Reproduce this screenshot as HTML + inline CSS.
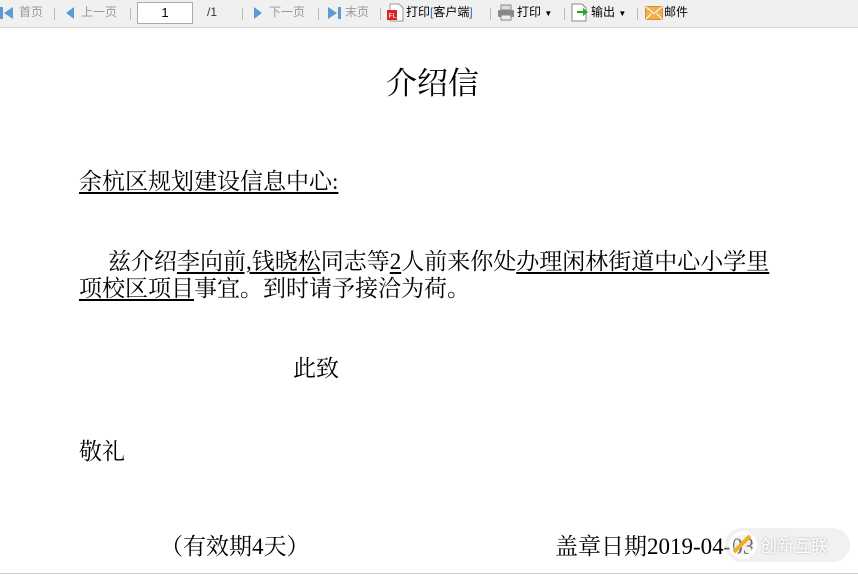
<!DOCTYPE html>
<html><head><meta charset="utf-8"><style>
body{margin:0;width:858px;height:577px;background:#fff;position:relative;overflow:hidden;font-family:"Liberation Serif","Noto Serif CJK SC",serif;color:#000}
.tb{position:absolute;left:0;top:0;width:858px;height:27px;background:#f0f0f0;border-bottom:1px solid #d8d8d8;font-family:"Liberation Sans","Noto Sans CJK SC",sans-serif;font-size:12px;color:#999}
.tb span{position:absolute;top:4px;white-space:nowrap;line-height:17px}
.sep{position:absolute;top:8px;width:1px;height:12px;background:#bbb}
.t{position:absolute;white-space:nowrap;font-size:23px;line-height:24px}
u{text-decoration:underline;text-underline-offset:3px}
</style></head><body>
<div class="tb">
<svg style="position:absolute;left:0;top:6px" width="14" height="14"><rect x="0" y="1" width="3" height="12" fill="#5b9bd5"/><polygon points="13,1 13,13 4,7" fill="#5b9bd5"/></svg>
<span style="left:19px">首页</span><div class="sep" style="left:54px"></div>
<svg style="position:absolute;left:65px;top:6px" width="10" height="14"><polygon points="9,1 9,13 1,7" fill="#5b9bd5"/></svg>
<span style="left:81px">上一页</span><div class="sep" style="left:130px"></div>
<div style="position:absolute;left:137px;top:2px;width:54px;height:20px;background:#fff;border:1px solid #aab;font-size:13px;color:#000;text-align:center;line-height:20px">1</div>
<span style="left:207px;color:#333">/1</span><div class="sep" style="left:242px"></div>
<svg style="position:absolute;left:253px;top:6px" width="10" height="14"><polygon points="1,1 1,13 9,7" fill="#5b9bd5"/></svg>
<span style="left:269px">下一页</span><div class="sep" style="left:318px"></div>
<svg style="position:absolute;left:327px;top:6px" width="14" height="14"><polygon points="1,1 1,13 10,7" fill="#5b9bd5"/><rect x="11" y="1" width="3" height="12" fill="#5b9bd5"/></svg>
<span style="left:345px">末页</span><div class="sep" style="left:380px"></div>
<svg style="position:absolute;left:387px;top:3px" width="17" height="19"><path d="M3 1h9l4 4v13H3z" fill="#fff" stroke="#999"/><rect x="0" y="7" width="10" height="10" fill="#d22"/><text x="1.5" y="15" font-size="7" fill="#fff" font-family="Liberation Sans">FL</text></svg>
<span style="left:406px;color:#000">打印<span style="position:static;color:#36c">[</span>客户端<span style="position:static;color:#36c">]</span></span>
<div class="sep" style="left:490px"></div>
<svg style="position:absolute;left:497px;top:4px" width="18" height="17"><rect x="4" y="1" width="10" height="5" fill="#ddd" stroke="#888"/><rect x="1" y="6" width="16" height="7" rx="1" fill="#888"/><rect x="4" y="11" width="10" height="5" fill="#eee" stroke="#888"/></svg>
<span style="left:517px;color:#000">打印 <span style="position:static;font-size:8px">▼</span></span>
<div class="sep" style="left:564px"></div>
<svg style="position:absolute;left:571px;top:3px" width="18" height="19"><path d="M1 1h10l4 4v13H1z" fill="#fff" stroke="#888"/><path d="M6 8h6V5l5 4-5 4v-3H6z" fill="#2a2"/></svg>
<span style="left:591px;color:#000">输出 <span style="position:static;font-size:8px">▼</span></span>
<div class="sep" style="left:637px"></div>
<svg style="position:absolute;left:645px;top:6px" width="18" height="14"><rect x="0.5" y="0.5" width="17" height="13" fill="#f0b050" stroke="#d89030"/><path d="M0.5 0.5l8.5 7 8.5-7M0.5 13.5l6-6M17.5 13.5l-6-6" stroke="#fff" fill="none"/></svg>
<span style="left:664px;color:#000">邮件</span>
</div>
<div class="t" style="left:386px;top:68px;font-size:31px;line-height:32px">介绍信</div>
<div class="t" style="left:79px;top:170px"><u>余杭区规划建设信息中心:</u></div>
<div class="t" style="left:108px;top:250px">兹介绍<u>李向前,钱晓松</u>同志等<u>2</u>人前来你处<u>办理闲林街道中心小学里</u></div>
<div class="t" style="left:79px;top:277px"><u>项校区项目</u>事宜。到时请予接洽为荷。</div>
<div class="t" style="left:293px;top:357px">此致</div>
<div class="t" style="left:79px;top:440px">敬礼</div>
<div class="t" style="left:160px;top:535px">（有效期4天）</div>
<div class="t" style="left:555px;top:535px">盖章日期2019-04-03</div>
<div style="position:absolute;left:0;top:573px;width:858px;height:1px;background:#ccc"></div>
<div style="position:absolute;left:725px;top:528px;width:125px;height:34px;border-radius:17px;background:rgba(225,225,225,.45)"></div>
<svg style="position:absolute;left:728px;top:530px" width="30" height="30"><circle cx="15" cy="15" r="12" fill="none" stroke="#fff" stroke-width="4"/><path d="M6 22L22 6" stroke="#f0b020" stroke-width="4"/></svg>
<div class="t" style="left:760px;top:533px;font-size:17px;color:#fff;font-family:'Noto Sans CJK SC',sans-serif;text-shadow:0 0 2px #aaa">创新互联</div>
</body></html>
